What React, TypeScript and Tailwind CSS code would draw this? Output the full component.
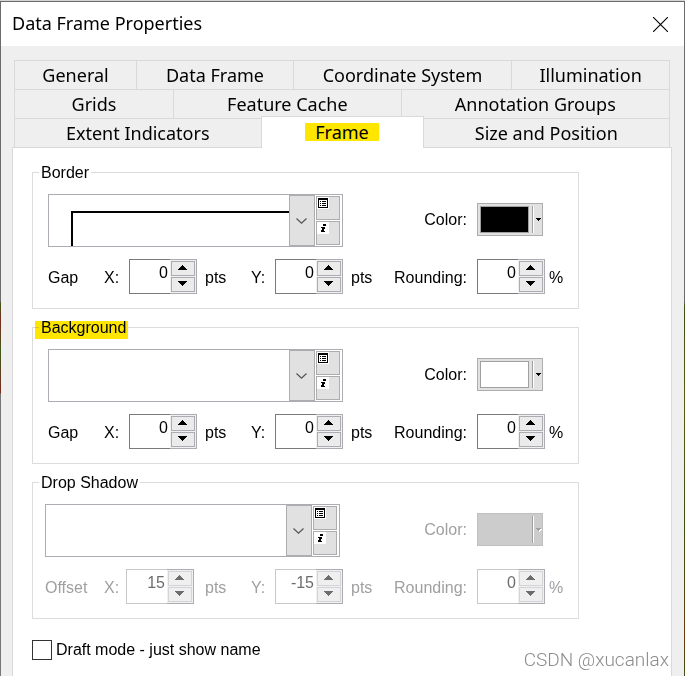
import { useState } from "react";
import clsx from "clsx";

const tabRows = [
  [
    { label: "General", grow: "grow-[122]" },
    { label: "Data Frame", grow: "grow-[157]" },
    { label: "Coordinate System", grow: "grow-[219]" },
    { label: "Illumination", grow: "grow-[158]" },
  ],
  [
    { label: "Grids", grow: "grow-[159]" },
    { label: "Feature Cache", grow: "grow-[228]" },
    { label: "Annotation Groups", grow: "grow-[269]" },
  ],
  [
    { label: "Extent Indicators", grow: "grow-[247]" },
    { label: "Frame", grow: "grow-[162]", active: true },
    { label: "Size and Position", grow: "grow-[247]" },
  ],
];

const groups = [
  { title: "Border", gapLabel: "Gap", x: "0", y: "0", rounding: "0", swatch: "bg-black", line: true },
  { title: "Background", gapLabel: "Gap", x: "0", y: "0", rounding: "0", swatch: "bg-white", marked: true },
  { title: "Drop Shadow", gapLabel: "Offset", x: "15", y: "-15", rounding: "0", swatch: "bg-[#cccccc]", disabled: true },
];

type Group = (typeof groups)[number];

function Tabs() {
  return (
    <div role="tablist" className="mx-0.5">
      {tabRows.map((row, i) => (
        <div key={i} className="flex h-[29px] border-r border-[#d9d9d9]">
          {row.map((tab) => (
            <button
              key={tab.label}
              type="button"
              role="tab"
              aria-selected={Boolean(tab.active)}
              className={clsx(
                "flex basis-0 items-center justify-center border-t border-l border-[#d9d9d9]",
                tab.grow,
                tab.active ? "relative z-10 -mt-0.5 -mr-px h-8 border-r bg-white pb-0.5" : "h-full",
              )}
            >
              <span className={clsx("leading-[18px]", tab.active && "bg-[#ffe600] px-2.5")}>{tab.label}</span>
            </button>
          ))}
        </div>
      ))}
    </div>
  );
}

function StylePicker({ name, line }: { name: string; line?: boolean }) {
  return (
    <div className="flex h-[53px] w-[295px] border border-[#abadb3]">
      <div className="relative flex flex-1">
        <div className="flex flex-1 overflow-hidden">
          {line && <div className="mt-4 ml-[22px] flex-1 border-t-2 border-l-2 border-black" />}
        </div>
        <div className="flex w-[26px] items-center border border-[#adadad] bg-[#e1e1e1] pl-1.5">
          <svg width="11" height="6" viewBox="0 0 11 6" fill="none" stroke="#555" strokeWidth="1.2">
            <path d="M0.5 0.5 L5.5 5.2 L10.5 0.5" />
          </svg>
        </div>
        <select aria-label={`${name} style`} className="absolute inset-0 h-full w-full appearance-none opacity-0">
          <option value="default" />
        </select>
      </div>
      <div className="flex flex-col gap-px py-px pr-0.5 pl-px">
        <button
          type="button"
          aria-label={`${name} style selector`}
          className="flex h-6 w-6 items-start border border-[#adadad] bg-[#e1e1e1]"
        >
          <svg width="12" height="12" viewBox="0 0 12 12" shapeRendering="crispEdges">
            <rect width="12" height="12" fill="#fff" />
            <path
              fill="#000"
              d="M1 1h10v10H1z M2 3v7h8V3z M3 4h1v1H3z M5 4h4v1H5z M3 6h1v1H3z M5 6h4v1H5z M3 8h1v1H3z M5 8h4v1H5z"
              fillRule="evenodd"
            />
          </svg>
        </button>
        <button
          type="button"
          aria-label={`${name} style properties`}
          className="flex h-6 w-6 items-start border border-[#adadad] bg-[#e1e1e1]"
        >
          <svg width="12" height="12" viewBox="0 0 12 12" shapeRendering="crispEdges">
            <rect width="12" height="12" fill="#fff" />
            <path fill="#000" d="M6 2h3v2H6z M4 5h4v1H4z M5 6h3v1H5z M5 7h2v1H5z M4 8h3v1H4z M4 9h4v1H4z" />
          </svg>
        </button>
      </div>
    </div>
  );
}

function ColorButton({ name, swatch, disabled }: { name: string; swatch: string; disabled?: boolean }) {
  return (
    <button
      type="button"
      aria-label={`${name} color`}
      disabled={disabled}
      className={clsx(
        "flex h-[33px] w-[66px] items-center border py-0.5 pl-0.5",
        disabled ? "border-[#bfbfbf] bg-[#cccccc]" : "border-[#adadad] bg-[#e1e1e1]",
      )}
    >
      <span className={clsx("h-[27px] w-[49px] border", swatch, disabled ? "border-[#cccccc]" : "border-[#a0a0a0]")} />
      <span className="ml-[3px] h-[27px] w-0.5 border-r border-l border-r-white border-l-[#a0a0a0]" />
      <svg className="ml-0.5" width="6" height="4" viewBox="0 0 6 4" shapeRendering="crispEdges">
        {disabled && <path fill="#fff" d="M1 1h5v1H5v1H4v1H3V3H2V2H1z" />}
        <path fill={disabled ? "#a0a0a0" : "#000"} d="M0 0h5v1H4v1H3v1H2V2H1V1H0z" />
      </svg>
    </button>
  );
}

function Spinner({ id, initial, disabled }: { id: string; initial: string; disabled?: boolean }) {
  const [value, setValue] = useState(initial);
  const step = (n: number) => setValue(String(Number(value) + n));
  const arrow = disabled ? "#6d6d6d" : "#000";
  const button = clsx(
    "flex h-[15px] w-6 items-center border pb-0.5 pl-1.5",
    disabled ? "border-[#d4d4d8] bg-[#efefef]" : "border-[#abadb3] bg-[#ebebeb]",
  );

  return (
    <div className="flex h-[35px] w-[68px]">
      <input
        id={id}
        value={value}
        disabled={disabled}
        onChange={(e) => setValue(e.target.value)}
        className={clsx(
          "w-[41px] border border-r-0 bg-white pr-0.5 pb-2 text-right outline-none",
          disabled ? "border-[#c8c8c8] text-[#6d6d6d]" : "border-[#7a7a7a] text-black",
        )}
      />
      <div className="flex flex-1 flex-col gap-px border border-l-0 border-[#abadb3] bg-[#f0f0f0] p-px">
        <button type="button" aria-label="Increase" disabled={disabled} onClick={() => step(1)} className={button}>
          <svg width="9" height="5" viewBox="0 0 9 5" shapeRendering="crispEdges">
            <path fill={arrow} d="M4 0h1v1h1v1h1v1h1v1h1v1H0V4h1V3h1V2h1V1h1z" />
          </svg>
        </button>
        <button type="button" aria-label="Decrease" disabled={disabled} onClick={() => step(-1)} className={button}>
          <svg width="9" height="5" viewBox="0 0 9 5" shapeRendering="crispEdges">
            <path fill={arrow} d="M0 0h9v1H8v1H7v1H6v1H5v1H4V4H3V3H2V2H1V1H0z" />
          </svg>
        </button>
      </div>
    </div>
  );
}

function FrameGroup({ group }: { group: Group }) {
  const { title, disabled } = group;
  const id = title.toLowerCase().replace(" ", "-");

  return (
    <fieldset className={clsx("border border-[#dcdcdc] pb-3.5", disabled ? "pl-3" : "pl-[15px]")}>
      <legend className={clsx("relative h-5 px-0.5 leading-[22px]", disabled ? "-ml-1.5" : "-ml-[9px]")}>
        {title}
        {group.marked && <span className="absolute top-1 right-0 -left-1 h-[18px] bg-[#ffe600] mix-blend-multiply" />}
      </legend>
      <div
        className={clsx(
          "grid items-center gap-y-3 pt-3",
          disabled
            ? "grid-cols-[59px_22px_68px_57px_24px_68px_51px_83px_68px_auto] text-[#a0a0a0]"
            : "grid-cols-[56px_25px_68px_54px_24px_68px_51px_83px_68px_auto]",
        )}
      >
        <div className="col-span-6">
          <StylePicker name={title} line={group.line} />
        </div>
        <span className="col-span-2 pr-2.5 pb-0.5 text-right">Color:</span>
        <div className="col-span-2 pb-0.5">
          <ColorButton name={title} swatch={group.swatch} disabled={disabled} />
        </div>

        <span className="pt-0.5">{group.gapLabel}</span>
        <label htmlFor={`${id}-x`} className="pt-0.5">
          X:
        </label>
        <Spinner id={`${id}-x`} initial={group.x} disabled={disabled} />
        <span className={clsx("pt-0.5", disabled ? "pl-[11px]" : "pl-2")}>pts</span>
        <label htmlFor={`${id}-y`} className="pt-0.5">
          Y:
        </label>
        <Spinner id={`${id}-y`} initial={group.y} disabled={disabled} />
        <span className="pt-0.5 pl-2">pts</span>
        <label htmlFor={`${id}-rounding`} className="pt-0.5 pr-2.5 text-right">
          Rounding:
        </label>
        <Spinner id={`${id}-rounding`} initial={group.rounding} disabled={disabled} />
        <span className="pt-0.5 pl-1">%</span>
      </div>
    </fieldset>
  );
}

export default function App() {
  return (
    <div className="relative flex min-h-screen flex-col bg-[#d4d4d4] pt-px text-black">
      <div className="flex flex-1">
        {/* desktop showing past the window edge */}
        <div className="w-px bg-[linear-gradient(#6b6b6b_300px,#3f5a1c_302px,#7a2a20_320px,#3f5a1c_350px,#7a2a20_392px,#777777_393px)]" />
        <div className="flex flex-1 flex-col border-t border-[#6b6b6b] bg-[#efefef]">
          <header className="flex h-11 items-center justify-between bg-white pr-4 pl-[11px]">
            <h1 className="pb-0.5 font-['Noto_Sans',sans-serif] text-lg">Data Frame Properties</h1>
            <button type="button" aria-label="Close">
              <svg width="15" height="15" viewBox="0 0 15 15" stroke="#000" strokeWidth="1.1">
                <path d="M0 0 L15 15 M15 0 L0 15" />
              </svg>
            </button>
          </header>

          <div className="flex flex-1 flex-col pt-3.5 pr-3 pl-[11px]">
            <div className="font-['Noto_Sans',sans-serif] text-lg">
              <Tabs />
            </div>
            <main className="flex-1 border border-b-0 border-[#d9d9d9] bg-white pt-3.5 pl-[19px] font-['Liberation_Sans',sans-serif] text-base leading-5">
              <div className="flex w-full max-w-[547px] flex-col gap-2">
                {groups.map((group) => (
                  <FrameGroup key={group.title} group={group} />
                ))}
              </div>
              <label className="mt-5 flex w-fit items-center gap-1">
                <input type="checkbox" className="h-5 w-5 appearance-none border border-[#333333] bg-white checked:bg-[#333333]" />
                <span className="leading-[22px]">Draft mode - just show name</span>
              </label>
            </main>
          </div>
        </div>
        <div className="w-px bg-[linear-gradient(#6b6b6b_300px,#3a5214_306px,#5a5a10_400px,#3a5214_520px,#6e3a14_640px,#3a5214)]" />
      </div>
      <span className="absolute right-4 bottom-1 font-[Roboto,sans-serif] text-[19px] leading-6 font-light text-[#8c8c8c]">
        CSDN @xucanlax
      </span>
    </div>
  );
}
